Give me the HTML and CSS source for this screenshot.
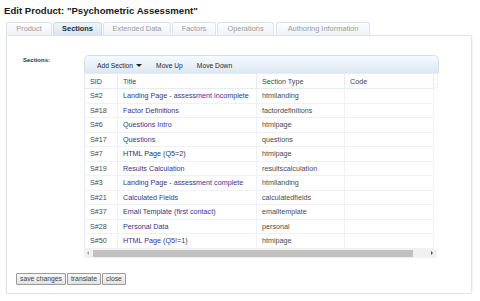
FILE: index.html
```html
<!DOCTYPE html>
<html>
<head>
<meta charset="utf-8">
<link rel="stylesheet" href="styles.css">
</head>
<body>
<h1 class="title">Edit Product: "Psychometric Assessment"</h1>
<div class="tabs">
  <div class="tab t1">Product</div>
  <div class="tab t2 active">Sections</div>
  <div class="tab t3">Extended Data</div>
  <div class="tab t4">Factors</div>
  <div class="tab t5">Operations</div>
  <div class="tab t6">Authoring Information</div>
</div>
<div class="panel">
  <div class="field">
    <div class="label">Sections:</div>
    <div class="grid">
      <div class="toolbar">
        <span class="tbtn">Add Section <span class="caret"></span></span>
        <span class="tbtn">Move Up</span>
        <span class="tbtn">Move Down</span>
      </div>
      <div class="body">
        <table class="tbl">
          <colgroup><col class="c1"><col class="c2"><col class="c3"><col class="c4"></colgroup>
          <thead><tr><th>SID</th><th>Title</th><th>Section Type</th><th>Code</th></tr></thead>
          <tbody>
            <tr><td>S#2</td><td class="lnk">Landing Page - assessment incomplete</td><td>htmllanding</td><td></td></tr>
            <tr><td>S#18</td><td class="lnk">Factor Definitions</td><td>factordefinitions</td><td></td></tr>
            <tr><td>S#6</td><td class="lnk">Questions Intro</td><td>htmlpage</td><td></td></tr>
            <tr><td>S#17</td><td class="lnk">Questions</td><td>questions</td><td></td></tr>
            <tr><td>S#7</td><td class="lnk dk">HTML Page (Q5=2)</td><td>htmlpage</td><td></td></tr>
            <tr><td>S#19</td><td class="lnk">Results Calculation</td><td>resultscalculation</td><td></td></tr>
            <tr><td>S#3</td><td class="lnk">Landing Page - assessment complete</td><td>htmllanding</td><td></td></tr>
            <tr><td>S#21</td><td class="lnk">Calculated Fields</td><td>calculatedfields</td><td></td></tr>
            <tr><td>S#37</td><td class="lnk">Email Template (first contact)</td><td>emailtemplate</td><td></td></tr>
            <tr><td>S#28</td><td class="lnk">Personal Data</td><td>personal</td><td></td></tr>
            <tr><td>S#50</td><td class="lnk">HTML Page (Q5!=1)</td><td>htmlpage</td><td></td></tr>
          </tbody>
        </table>
        <div class="vfill"></div>
      </div>
      <div class="hscroll">
        <span class="arr al"></span>
        <span class="thumb"></span>
        <span class="arr ar"></span>
      </div>
    </div>
  </div>
  <div class="buttons">
    <button class="btn">save changes</button><button class="btn">translate</button><button class="btn">close</button>
  </div>
</div>
</body>
</html>
```

FILE: styles.css
```css
html, body {
  margin: 0;
  padding: 0;
  background: #fff;
  font-family: "Liberation Sans", Arial, sans-serif;
}
.title {
  margin: 0;
  padding: 5px 0 0 4px;
  height: 17px;
  box-sizing: border-box;
  font-size: 9.6px;
  font-weight: bold;
  color: #1a1a1a;
  line-height: 11px;
}
.tabs {
  display: flex;
  margin: 5px 0 0 6px;
  height: 13px;
  gap: 1px;
}
.tab {
  box-sizing: border-box;
  height: 13px;
  border: 1px solid #dbe3ec;
  border-bottom: none;
  border-radius: 3px 3px 0 0;
  background: linear-gradient(#fdfeff, #eef3f8);
  color: #9a9a9a;
  font-size: 7.4px;
  line-height: 12px;
  text-align: center;
}
.tab.active {
  background: linear-gradient(#eef4fa, #d9e5f2);
  color: #1c2a3a;
  font-weight: bold;
  border-color: #cbd8e6;
}
.t1 { width: 46px; }
.t2 { width: 49px; }
.t3 { width: 68px; }
.t4 { width: 44px; }
.t5 { width: 57px; }
.t6 { width: 94px; margin-left: 1px; }
.panel {
  box-sizing: border-box;
  margin-left: 6px;
  width: 466px;
  height: 259px;
  border: 1px solid #e2e2e2;
  border-radius: 0 3px 3px 3px;
  box-shadow: 0 1px 2px rgba(0,0,0,0.12);
  padding: 19px 0 0 0;
  display: flex;
  flex-direction: column;
}
.field {
  display: flex;
}
.label {
  width: 77px;
  padding: 2px 0 0 16px;
  box-sizing: border-box;
  font-size: 6px;
  font-weight: bold;
  color: #333;
}
.grid {
  width: 355px;
  display: flex;
  flex-direction: column;
}
.toolbar {
  box-sizing: border-box;
  height: 18px;
  border: 1px solid #d3dfec;
  border-bottom: none;
  border-radius: 5px 5px 0 0;
  background: linear-gradient(#f7fafd, #dce7f3);
  display: flex;
  align-items: center;
  padding: 1px 0 0 12px;
  font-size: 6.7px;
  color: #2a2a2a;
}
.tbtn { margin-right: 14px; display: inline-flex; align-items: center; }
.caret {
  display: inline-block;
  width: 0; height: 0;
  border-left: 3px solid transparent;
  border-right: 3px solid transparent;
  border-top: 3px solid #222;
  margin-left: 3px;
}
.body {
  display: flex;
  align-items: flex-start;
  background: #fff;
}
.tbl {
  border-collapse: collapse;
  table-layout: fixed;
  width: 349px;
  font-size: 7.2px;
  color: #4a4a4a;
}
.c1 { width: 33px; }
.c2 { width: 139px; }
.c3 { width: 88px; }
.c4 { width: 89px; }
.tbl th {
  height: 14px;
  text-align: left;
  font-weight: normal;
  padding: 0 0 0 5px;
  color: #444;
  border-right: 1px solid #e6ecf3;
  border-bottom: 1px solid #e6ecf3;
  border-top: 1px solid #e6ecf3;
}
.tbl td {
  height: 13.5px;
  padding: 0 0 0 5px;
  border-right: 1px solid #eef2f7;
  border-bottom: 1px solid #eef2f7;
  white-space: nowrap;
  overflow: hidden;
}
.tbl tr td:first-child, .tbl tr th:first-child { border-left: 1px solid #e6ecf3; }
.tbl td.lnk { color: #343490; }
.tbl td.lnk.dk { color: #2c3458; }
.vfill {
  width: 4px;
  border-top: 1px solid #e6ecf3;
  height: 15px;
  border-right: 1px solid #eef2f7;
  border-bottom: 1px solid #eef2f7;
  box-sizing: border-box;
}
.hscroll {
  height: 9px;
  width: 353px;
  background: #f1f1f1;
  display: flex;
  align-items: center;
}
.arr {
  width: 0; height: 0;
  border-top: 2px solid transparent;
  border-bottom: 2px solid transparent;
}
.al { border-right: 2px solid #a3a3a3; margin-left: 3px; }
.ar { border-left: 2px solid #505050; margin-left: 18px; }
.thumb {
  height: 7px;
  width: 320px;
  margin-left: 4px;
  background: #c1c1c1;
}
.buttons {
  display: flex;
  margin: 15px 0 0 9px;
  gap: 1px;
}
.btn {
  font-family: "Liberation Sans", Arial, sans-serif;
  font-size: 6.8px;
  color: #444;
  height: 12px;
  padding: 0 3px;
  border: 1px solid #9b9b9b;
  border-radius: 1px;
  background: linear-gradient(#f8f8f8, #e2e2e2);
  line-height: 10px;
  white-space: nowrap;
}
```
